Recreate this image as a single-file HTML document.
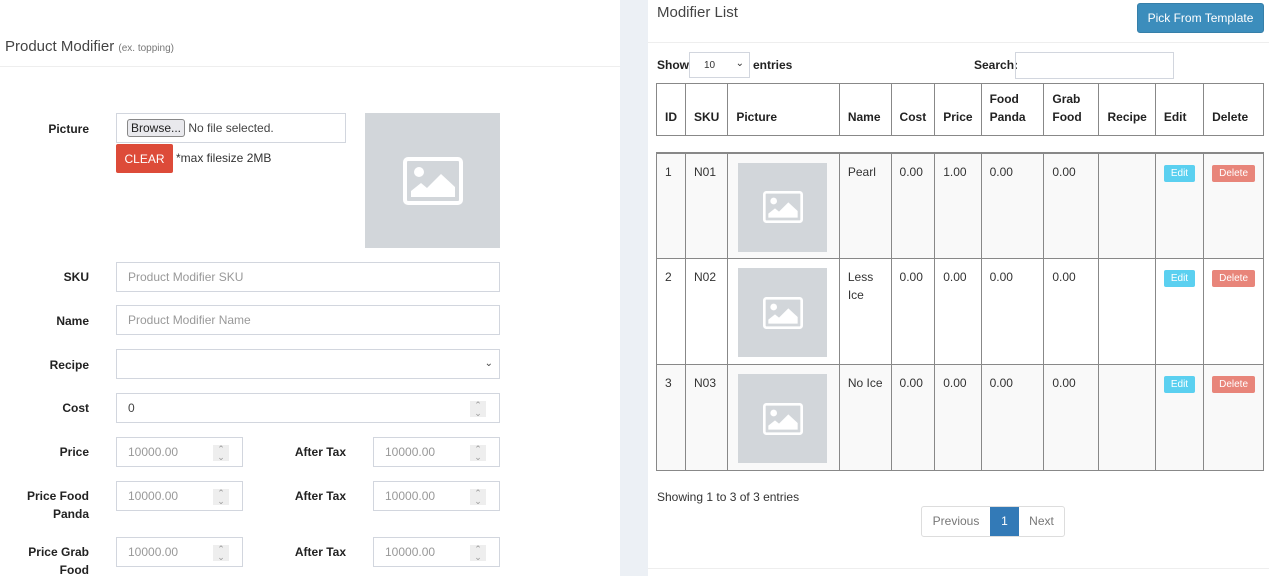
<!DOCTYPE html>
<html><head><meta charset="utf-8"><style>
*{box-sizing:border-box;margin:0;padding:0}
body{width:1269px;height:576px;overflow:hidden;background:#fff;font-family:"Liberation Sans",sans-serif;font-size:12px;color:#333;position:relative}
.a{position:absolute}
.gap{left:620px;top:0;width:28px;height:576px;background:#ecf0f5}
.lbl{position:absolute;font-weight:bold;font-size:12px;color:#222;text-align:right;line-height:18px}
.inp{position:absolute;border:1px solid #d2d6de;background:#fff;height:30px;font-size:12px;color:#999;padding-left:11px;line-height:28px}
.spin{position:absolute;right:13px;top:7px;width:16px;height:16px;background:#eee;color:#999;font-size:9px;text-align:center;line-height:8px}
table{position:absolute;left:656px;top:83px;border-collapse:collapse;width:608px}
td,th{border:1px solid #888;text-align:left;vertical-align:top;padding:11px 8px 0;font-size:12px}
th{vertical-align:bottom;font-weight:bold;color:#222;height:52px;padding:4px 8px 9px;line-height:18px}
.ph{width:89px;height:89px;background:#d2d6da;display:flex;align-items:center;justify-content:center}
.be{display:inline-block;background:#5bd0f0;color:#fff;font-size:10px;padding:3px 7px;border-radius:2px}
.bd{display:inline-block;background:#e8857a;color:#fff;font-size:10px;padding:3px 7px;border-radius:2px}
</style></head><body>
<div class="a gap"></div>
<div class="a" style="left:5px;top:38px;font-size:15px;color:#444">Product Modifier <span style="font-size:10px;color:#777">(ex. topping)</span></div>
<div class="a" style="left:0;top:66px;width:620px;height:1px;background:#eee"></div>

<div class="lbl" style="left:20px;width:69px;top:120px">Picture</div>
<div class="inp" style="left:116px;top:113px;width:230px;color:#444;padding-left:10px"><span style="border:1px solid #888;background:#e9e9ed;border-radius:3px;padding:1px 3px;color:#222;font-size:12px">Browse...</span> No file selected.</div>
<div class="a" style="left:116px;top:144px;width:57px;height:29px;background:#dd4b39;color:#fff;font-size:12px;text-align:center;line-height:30px;border-radius:2px">CLEAR</div>
<div class="a" style="left:176px;top:151px;color:#333">*max filesize 2MB</div>
<div class="a" style="left:365px;top:113px;width:135px;height:135px;background:#d2d6da;display:flex;align-items:center;justify-content:center">
<svg width="60" height="48" viewBox="0 0 60 48"><rect x="2" y="2" width="56" height="44" rx="3" fill="none" stroke="#fff" stroke-width="4"/><circle cx="16" cy="15" r="5" fill="#fff"/><path d="M8 40 L8 34 L18 26 L24 31 L38 17 L52 30 L52 40 Z" fill="#fff"/></svg></div>

<div class="lbl" style="left:20px;width:69px;top:268px">SKU</div>
<div class="inp" style="left:116px;top:262px;width:384px">Product Modifier SKU</div>
<div class="lbl" style="left:20px;width:69px;top:312px">Name</div>
<div class="inp" style="left:116px;top:305px;width:384px">Product Modifier Name</div>
<div class="lbl" style="left:20px;width:69px;top:356px">Recipe</div>
<div class="inp" style="left:116px;top:349px;width:384px"><span style="position:absolute;right:6px;top:0;color:#444;font-size:10px">&#8964;</span></div>
<div class="lbl" style="left:20px;width:69px;top:399px">Cost</div>
<div class="inp" style="left:116px;top:393px;width:384px;color:#444">0<div class="spin">&#8963;<br>&#8964;</div></div>

<div class="lbl" style="left:20px;width:69px;top:443px">Price</div>
<div class="inp" style="left:116px;top:437px;width:127px">10000.00<div class="spin">&#8963;<br>&#8964;</div></div>
<div class="lbl" style="left:20px;width:69px;top:487px">Price Food<br>Panda</div>
<div class="inp" style="left:116px;top:481px;width:127px">10000.00<div class="spin">&#8963;<br>&#8964;</div></div>
<div class="lbl" style="left:20px;width:69px;top:543px">Price Grab<br>Food</div>
<div class="inp" style="left:116px;top:537px;width:127px">10000.00<div class="spin">&#8963;<br>&#8964;</div></div>
<div class="lbl" style="left:270px;width:76px;top:443px">After Tax</div>
<div class="lbl" style="left:270px;width:76px;top:487px">After Tax</div>
<div class="lbl" style="left:270px;width:76px;top:543px">After Tax</div>
<div class="inp" style="left:373px;top:437px;width:127px">10000.00<div class="spin">&#8963;<br>&#8964;</div></div>
<div class="inp" style="left:373px;top:481px;width:127px">10000.00<div class="spin">&#8963;<br>&#8964;</div></div>
<div class="inp" style="left:373px;top:537px;width:127px">10000.00<div class="spin">&#8963;<br>&#8964;</div></div>

<div class="a" style="left:657px;top:4px;font-size:15px;color:#444">Modifier List</div>
<div class="a" style="left:1137px;top:3px;width:127px;height:30px;background:#3c8dbc;border:1px solid #367fa9;border-radius:3px;color:#fff;font-size:12px;text-align:center;line-height:28px">Pick From Template</div>
<div class="a" style="left:648px;top:42px;width:621px;height:1px;background:#eee"></div>
<div class="a" style="left:657px;top:58px;font-weight:bold;color:#222">Show</div>
<div class="a" style="left:689px;top:52px;width:61px;height:26px;border:1px solid #d2d6de;font-size:10px;padding:7px 0 0 14px">10<span style="position:absolute;right:5px;top:5px">&#8964;</span></div>
<div class="a" style="left:753px;top:58px;font-weight:bold;color:#222">entries</div>
<div class="a" style="left:974px;top:58px;font-weight:bold;color:#222">Search:</div>
<div class="a" style="left:1015px;top:52px;width:159px;height:27px;border:1px solid #d2d6de"></div>

<table>
<tr><th style="width:29px">ID</th><th style="width:41px">SKU</th><th style="width:112px">Picture</th><th style="width:50px">Name</th><th style="width:43px">Cost</th><th style="width:46px">Price</th><th style="width:66px">Food<br>Panda</th><th style="width:58px">Grab<br>Food</th><th style="width:56px">Recipe</th><th style="width:47px">Edit</th><th>Delete</th></tr>
<tr><td colspan="11" style="height:17px;border-left:none;border-right:none;padding:0;border-bottom:2px solid #888"></td></tr>
<tr style="background:#f9f9f9;height:106px"><td>1</td><td>N01</td><td style="padding:9px 10px 0"><div class="ph"><svg width="40" height="32" viewBox="0 0 60 48"><rect x="2" y="2" width="56" height="44" rx="3" fill="none" stroke="#fff" stroke-width="4"/><circle cx="16" cy="15" r="5" fill="#fff"/><path d="M8 40 L8 34 L18 26 L24 31 L38 17 L52 30 L52 40 Z" fill="#fff"/></svg></div></td><td>Pearl</td><td>0.00</td><td>1.00</td><td>0.00</td><td>0.00</td><td></td><td><span class="be">Edit</span></td><td><span class="bd">Delete</span></td></tr>
<tr style="height:106px"><td>2</td><td>N02</td><td style="padding:9px 10px 0"><div class="ph"><svg width="40" height="32" viewBox="0 0 60 48"><rect x="2" y="2" width="56" height="44" rx="3" fill="none" stroke="#fff" stroke-width="4"/><circle cx="16" cy="15" r="5" fill="#fff"/><path d="M8 40 L8 34 L18 26 L24 31 L38 17 L52 30 L52 40 Z" fill="#fff"/></svg></div></td><td style="line-height:18px;padding-top:9px">Less<br>Ice</td><td>0.00</td><td>0.00</td><td>0.00</td><td>0.00</td><td></td><td><span class="be">Edit</span></td><td><span class="bd">Delete</span></td></tr>
<tr style="background:#f9f9f9;height:106px"><td>3</td><td>N03</td><td style="padding:9px 10px 0"><div class="ph"><svg width="40" height="32" viewBox="0 0 60 48"><rect x="2" y="2" width="56" height="44" rx="3" fill="none" stroke="#fff" stroke-width="4"/><circle cx="16" cy="15" r="5" fill="#fff"/><path d="M8 40 L8 34 L18 26 L24 31 L38 17 L52 30 L52 40 Z" fill="#fff"/></svg></div></td><td style="white-space:nowrap">No Ice</td><td>0.00</td><td>0.00</td><td>0.00</td><td>0.00</td><td></td><td><span class="be">Edit</span></td><td><span class="bd">Delete</span></td></tr>
</table>

<div class="a" style="left:657px;top:490px;color:#333">Showing 1 to 3 of 3 entries</div>
<div class="a" style="left:921px;top:506px;width:144px;height:31px;border:1px solid #ddd;border-radius:3px;display:flex;font-size:12px;color:#777;line-height:29px">
<div style="width:68px;text-align:center">Previous</div>
<div style="width:29px;text-align:center;background:#337ab7;color:#fff">1</div>
<div style="flex:1;text-align:center">Next</div></div>
<div class="a" style="left:648px;top:568px;width:621px;height:1px;background:#eee"></div>
</body></html>
